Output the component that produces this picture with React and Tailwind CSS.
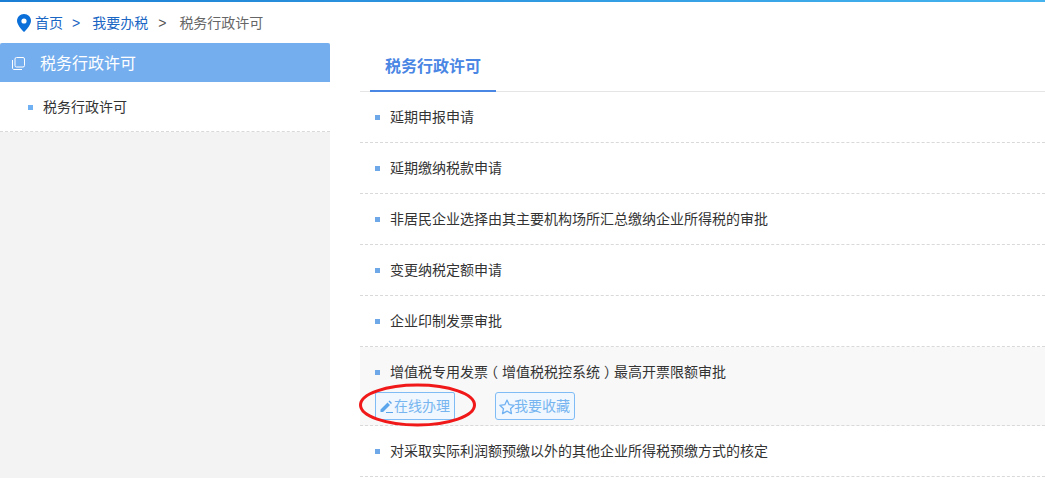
import React from 'react';

const items = [
  '延期申报申请',
  '延期缴纳税款申请',
  '非居民企业选择由其主要机构场所汇总缴纳企业所得税的审批',
  '变更纳税定额申请',
  '企业印制发票审批',
];

function Row({ text }) {
  return (
    <div className="h-[51px] flex items-center border-b border-dashed border-[#d9d9d9] pl-[15px]">
      <span className="w-[5px] h-[5px] bg-[#6fa8e8] mr-[10px]" />
      <span className="text-[14px] text-[#333]">{text}</span>
    </div>
  );
}

export default function App() {
  return (
    <div className="w-[1045px] h-[478px] overflow-hidden bg-white font-['Liberation_Sans','Noto_Sans_CJK_SC',sans-serif]">
      <div className="h-[2px] bg-gradient-to-r from-[#1a7fd4] to-[#45b4ee]" />
      <div className="h-[41px] flex items-center pl-[17px] pt-[1px] text-[14px]">
        <svg width="14" height="18" viewBox="0 0 14 18" className="mr-[4px]">
          <path d="M7 0C3 0 0 3 0 7c0 4.500 7 11 7 11s7-6.500 7-11c0-4-3-7-7-7z" fill="#0a6fd8" />
          <circle cx="7" cy="7" r="2.600" fill="#fff" />
        </svg>
        <span className="text-[#1a66c4]">首页</span>
        <span className="text-[#1a66c4] ml-[9px] mr-[12px]">&gt;</span>
        <span className="text-[#1a66c4]">我要办税</span>
        <span className="text-[#555] ml-[10px] mr-[13px]">&gt;</span>
        <span className="text-[#666]">税务行政许可</span>
      </div>
      <div className="flex">
        <div className="w-[330px] h-[435px] bg-[#f3f3f3]">
          <div className="h-[39px] bg-[#75aeee] rounded-t-[2px] flex items-center pl-[11px] pt-[2px] text-white text-[16px]">
            <svg width="15" height="15" viewBox="0 0 15 15" fill="none" stroke="#fff" strokeWidth="1" className="mr-[14px]">
              <rect x="4" y="1.500" width="9.500" height="9.500" rx="1.500" />
              <path d="M1.500 4v8c0 .8.700 1.500 1.500 1.500h8" />
            </svg>
            税务行政许可
          </div>
          <div className="h-[50px] bg-white border-b border-dashed border-[#d9d9d9] flex items-center pl-[28px] pt-[1px]">
            <span className="w-[5px] h-[5px] bg-[#6fb1f2] mr-[10px]" />
            <span className="text-[14px] text-[#333]">税务行政许可</span>
          </div>
        </div>
        <div className="ml-[30px] w-[685px]">
          <div className="h-[49px] border-b border-[#e5e5e5]">
            <div className="ml-[10px] w-[126px] h-[49px] border-b-2 border-[#4a86e4] flex items-center justify-center text-[16px] font-bold text-[#4a86e4]">
              税务行政许可
            </div>
          </div>
          {items.map((t) => (
            <Row key={t} text={t} />
          ))}
          <div className="relative h-[79px] bg-[#f8f8f8] border-b border-dashed border-[#d9d9d9] pl-[15px]">
            <div className="h-[50px] flex items-center">
              <span className="w-[5px] h-[5px] bg-[#6fa8e8] mr-[10px]" />
              <span className="text-[14px] text-[#333]">
                增值税专用发票<span className="inline-block -translate-x-[4px]">（</span>增值税税控系统<span className="inline-block translate-x-[4px]">）</span>最高开票限额审批
              </span>
            </div>
            <div className="flex gap-[40px] -mt-[5px]">
              <div className="h-[28px] w-[80px] flex items-center border border-[#7fbcf5] rounded-[2px] bg-[#f0f7fe] text-[#76b5f0] text-[14px] pl-[3px] pt-[1px]">
                <svg width="15" height="15" viewBox="0 0 15 15" fill="#5aa5ec" className="shrink-0">
                  <path d="M1.500 10.500L8.500 3.500l2.500 2.500-7 7H1.500zM9.500 2.500l1-1 2.500 2.500-1 1z" />
                  <rect x="7" y="13" width="7" height="1" />
                </svg>
                在线办理
              </div>
              <div className="h-[28px] w-[80px] flex items-center border border-[#7fbcf5] rounded-[3px] bg-[#f0f7fe] text-[#76b5f0] text-[14px] pl-[3px] pt-[1px]">
                <svg width="16" height="16" viewBox="0 0 15 15" fill="none" stroke="#6fb1f2" strokeWidth="1.200" strokeLinejoin="round" className="shrink-0 mt-[1px]">
                  <path d="M7.500 1l2 4.300 4.700.6-3.400 3.200.9 4.600-4.200-2.300-4.200 2.300.9-4.600L.8 5.900l4.700-.6z" />
                </svg>
                <span className="-ml-[1px]">我要收藏</span>
              </div>
            </div>
            <svg width="120" height="46" viewBox="0 0 120 46" fill="none" className="absolute left-[-1px] top-[36px]">
              <ellipse cx="58.500" cy="22" rx="57" ry="20" stroke="#f01818" strokeWidth="3" />
            </svg>
          </div>
          <Row text="对采取实际利润额预缴以外的其他企业所得税预缴方式的核定" />
        </div>
      </div>
    </div>
  );
}
